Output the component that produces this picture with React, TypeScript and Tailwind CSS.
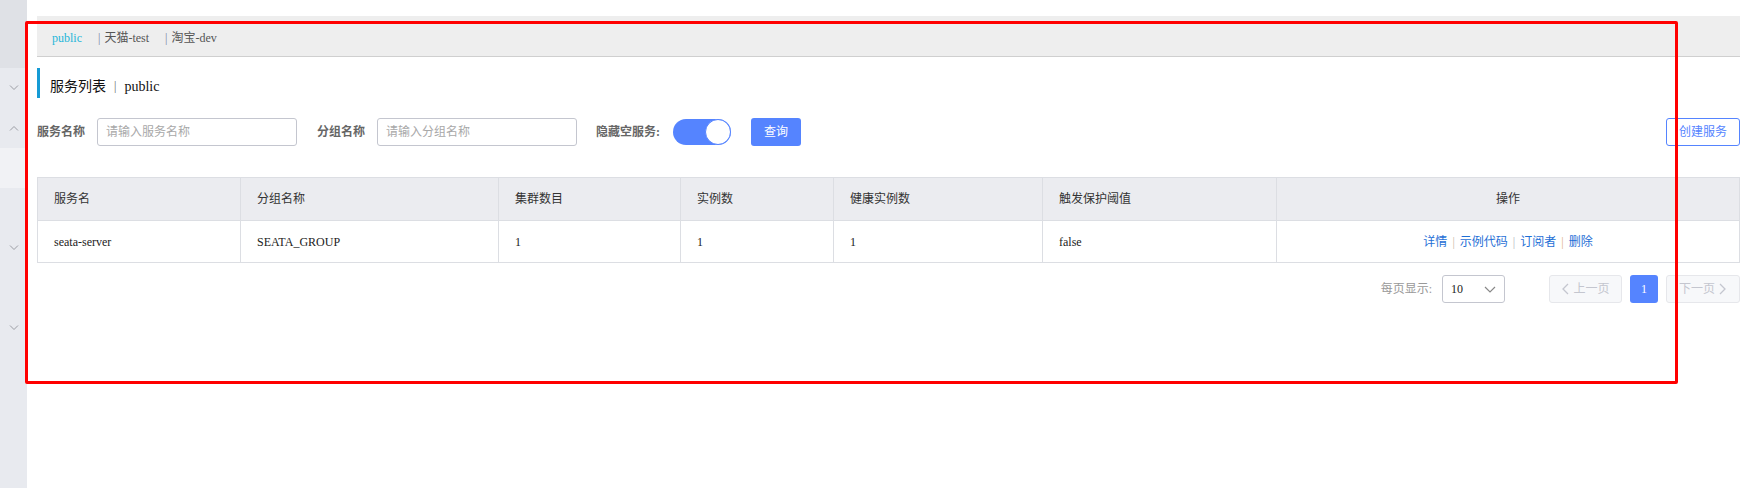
import React from "react";

const Chevron = ({ up = false }: { up?: boolean }) => (
  <svg width="10" height="6" viewBox="0 0 10 6" className="block">
    <path
      d={up ? "M1 5.5 L5 1.5 L9 5.5" : "M1 0.5 L5 4.5 L9 0.5"}
      fill="none"
      stroke="#9a9ca3"
      strokeWidth="1"
    />
  </svg>
);

const cols = [
  { label: "服务名", w: "w-[203px]", val: "seata-server" },
  { label: "分组名称", w: "w-[258px]", val: "SEATA_GROUP" },
  { label: "集群数目", w: "w-[182px]", val: "1" },
  { label: "实例数", w: "w-[153px]", val: "1" },
  { label: "健康实例数", w: "w-[209px]", val: "1" },
  { label: "触发保护阈值", w: "w-[234px]", val: "false" },
];

export default function App() {
  return (
    <div className="relative flex h-[488px] w-[1748px] overflow-hidden bg-white font-['Liberation_Serif','Noto_Sans_CJK_SC',serif] text-[12px] text-[#333]">
      {/* sidebar */}
      <div className="flex w-[27px] shrink-0 flex-col bg-[#e8eaef]">
        <div className="h-[68px] bg-[#dfe1e6]" />
        <div className="flex h-[40px] items-center justify-center">
          <Chevron />
        </div>
        <div className="flex h-[40px] items-center justify-center">
          <Chevron up />
        </div>
        <div className="h-[40px] bg-[#f1f2f5]" />
        <div className="h-[40px]" />
        <div className="flex h-[40px] items-center justify-center">
          <Chevron />
        </div>
        <div className="h-[40px]" />
        <div className="flex h-[40px] items-center justify-center">
          <Chevron />
        </div>
      </div>

      {/* main */}
      <div className="flex min-w-0 flex-1 flex-col pl-[10px] pr-[8px] pt-[16px]">
        {/* tabs */}
        <div className="flex h-[41px] items-center border-b border-[#cfcfcf] bg-[#eeeeee] pl-[15px] pt-[4px] text-[12px]">
          <span className="text-[#1fb6d9]">public</span>
          <span className="ml-[16px] text-[#7b7fa0]">|</span>
          <span className="ml-[4px] text-[#555]">天猫-test</span>
          <span className="ml-[16px] text-[#7b7fa0]">|</span>
          <span className="ml-[4px] text-[#555]">淘宝-dev</span>
        </div>

        {/* title */}
        <div className="mt-[11px] flex h-[30px] items-center border-l-[3px] border-[#169bd5] pl-[10px] pt-[6px] text-[14px] text-[#111]">
          <span>服务列表</span>
          <span className="ml-[8px] mr-[8px] text-[12px] text-[#666]">|</span>
          <span>public</span>
        </div>

        {/* form */}
        <div className="mt-[20px] flex h-[28px] items-center">
          <span className="w-[60px] font-bold text-[#666]">服务名称</span>
          <div className="flex h-[28px] w-[200px] items-center rounded-[3px] border border-[#c4c6cf] pl-[8px] text-[#a8a8a8]">
            请输入服务名称
          </div>
          <span className="ml-[20px] w-[60px] font-bold text-[#666]">分组名称</span>
          <div className="flex h-[28px] w-[200px] items-center rounded-[3px] border border-[#c4c6cf] pl-[8px] text-[#a8a8a8]">
            请输入分组名称
          </div>
          <span className="ml-[19px] w-[77px] font-bold text-[#666]">隐藏空服务:</span>
          <div className="flex h-[26px] w-[58px] items-center justify-end rounded-full bg-[#5584ff]">
            <div className="h-[26px] w-[26px] rounded-full border border-[#5584ff] bg-white" />
          </div>
          <div className="ml-[20px] flex h-[28px] w-[50px] items-center justify-center rounded-[3px] bg-[#5584ff] text-white">
            查询
          </div>
          <div className="ml-auto flex h-[28px] w-[74px] items-center justify-center rounded-[3px] border border-[#5584ff] bg-white text-[#5584ff]">
            创建服务
          </div>
        </div>

        {/* table */}
        <div className="mt-[31px] border border-[#dcdee3]">
          <div className="flex h-[42px] bg-[#ebecf0]">
            {cols.map((c) => (
              <div
                key={c.label}
                className={`${c.w} flex shrink-0 items-center border-r border-[#dcdee3] pl-[16px] text-[#333]`}
              >
                {c.label}
              </div>
            ))}
            <div className="flex flex-1 items-center justify-center text-[#333]">操作</div>
          </div>
          <div className="flex h-[42px] border-t border-[#dcdee3]">
            {cols.map((c) => (
              <div
                key={c.label}
                className={`${c.w} flex shrink-0 items-center border-r border-[#dcdee3] pl-[16px] text-[#222]`}
              >
                {c.val}
              </div>
            ))}
            <div className="flex flex-1 items-center justify-center text-[#1f6fd6]">
              <span>详情</span>
              <span className="mx-[5px] text-[#c9b9a6]">|</span>
              <span>示例代码</span>
              <span className="mx-[5px] text-[#b0b4c0]">|</span>
              <span>订阅者</span>
              <span className="mx-[5px] text-[#e0b080]">|</span>
              <span>删除</span>
            </div>
          </div>
        </div>

        {/* pagination */}
        <div className="mt-[11px] flex h-[30px] items-center justify-end">
          <span className="text-[#999]">每页显示:</span>
          <div className="ml-[10px] flex h-[28px] w-[63px] items-center justify-between rounded-[3px] border border-[#c4c6cf] pl-[8px] pr-[8px] text-[#222]">
            <span>10</span>
            <svg width="12" height="7" viewBox="0 0 12 7">
              <path d="M1 1 L6 6 L11 1" fill="none" stroke="#888" strokeWidth="1.2" />
            </svg>
          </div>
          <div className="ml-[44px] flex h-[28px] w-[73px] items-center justify-center gap-[4px] rounded-[3px] border border-[#e6e7eb] bg-[#f7f8fa] text-[#c4c6cf]">
            <svg width="8" height="12" viewBox="0 0 8 12">
              <path d="M7 1 L2 6 L7 11" fill="none" stroke="#c4c6cf" strokeWidth="1.3" />
            </svg>
            <span>上一页</span>
          </div>
          <div className="ml-[8px] flex h-[28px] w-[28px] items-center justify-center rounded-[3px] bg-[#5584ff] text-white">
            1
          </div>
          <div className="ml-[8px] flex h-[28px] w-[74px] items-center justify-center gap-[4px] rounded-[3px] border border-[#e6e7eb] bg-[#f7f8fa] text-[#c4c6cf]">
            <span>下一页</span>
            <svg width="8" height="12" viewBox="0 0 8 12">
              <path d="M1 1 L6 6 L1 11" fill="none" stroke="#c4c6cf" strokeWidth="1.3" />
            </svg>
          </div>
        </div>
      </div>

      {/* red annotation box */}
      <div className="pointer-events-none absolute left-[25px] top-[21px] h-[363px] w-[1653px] rounded-[2px] border-[3px] border-[#ff0000]" />
    </div>
  );
}
